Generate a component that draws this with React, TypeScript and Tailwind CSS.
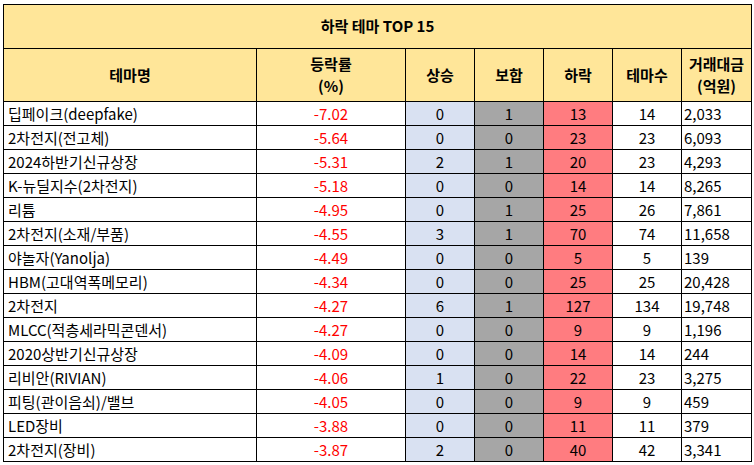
import React from "react";

const rows: [string, string, number, number, number, number, string][] = [
  ["딥페이크(deepfake)", "-7.02", 0, 1, 13, 14, "2,033"],
  ["2차전지(전고체)", "-5.64", 0, 0, 23, 23, "6,093"],
  ["2024하반기신규상장", "-5.31", 2, 1, 20, 23, "4,293"],
  ["K-뉴딜지수(2차전지)", "-5.18", 0, 0, 14, 14, "8,265"],
  ["리튬", "-4.95", 0, 1, 25, 26, "7,861"],
  ["2차전지(소재/부품)", "-4.55", 3, 1, 70, 74, "11,658"],
  ["야놀자(Yanolja)", "-4.49", 0, 0, 5, 5, "139"],
  ["HBM(고대역폭메모리)", "-4.34", 0, 0, 25, 25, "20,428"],
  ["2차전지", "-4.27", 6, 1, 127, 134, "19,748"],
  ["MLCC(적층세라믹콘덴서)", "-4.27", 0, 0, 9, 9, "1,196"],
  ["2020상반기신규상장", "-4.09", 0, 0, 14, 14, "244"],
  ["리비안(RIVIAN)", "-4.06", 1, 0, 22, 23, "3,275"],
  ["피팅(관이음쇠)/밸브", "-4.05", 0, 0, 9, 9, "459"],
  ["LED장비", "-3.88", 0, 0, 11, 11, "379"],
  ["2차전지(장비)", "-3.87", 2, 0, 40, 42, "3,341"],
];

export default function App() {
  const td = "border border-black h-[24px] p-0 leading-none";
  const th = "border border-black p-0 font-bold text-center leading-[22px]";
  return (
    <div className="bg-white w-[754px] h-[465px] pt-[4px] pl-[3px] text-[15px] text-black" style={{ fontFamily: '"Noto Sans CJK KR", "Noto Sans", sans-serif' }}>
      <table className="table-fixed border-collapse w-[748px]">
        <colgroup>
          <col className="w-[253px]" />
          <col className="w-[149px]" />
          <col className="w-[69px]" />
          <col className="w-[69px]" />
          <col className="w-[69px]" />
          <col className="w-[69px]" />
          <col className="w-[70px]" />
        </colgroup>
        <thead>
          <tr>
            <th colSpan={7} className="border border-black bg-[#FFE699] h-[44px] p-0 font-bold text-center">
              하락 테마 TOP 15
            </th>
          </tr>
          <tr className="bg-[#FFE699]">
            <th className={`${th} h-[53px]`}>테마명</th>
            <th className={th}>
              등락률
              <br />
              (%)
            </th>
            <th className={th}>상승</th>
            <th className={th}>보합</th>
            <th className={th}>하락</th>
            <th className={th}>테마수</th>
            <th className={th}>
              거래대금
              <br />
              (억원)
            </th>
          </tr>
        </thead>
        <tbody>
          {rows.map((r) => (
            <tr key={r[0]}>
              <td className={`${td} text-left pl-[4px] whitespace-nowrap`}>{r[0]}</td>
              <td className={`${td} text-center text-[#FF0000]`}>{r[1]}</td>
              <td className={`${td} text-center bg-[#D9E1F2]`}>{r[2]}</td>
              <td className={`${td} text-center bg-[#A6A6A6]`}>{r[3]}</td>
              <td className={`${td} text-center bg-[#FF7C80]`}>{r[4]}</td>
              <td className={`${td} text-center`}>{r[5]}</td>
              <td className={`${td} text-left pl-[2px]`}>{r[6]}</td>
            </tr>
          ))}
        </tbody>
      </table>
    </div>
  );
}
